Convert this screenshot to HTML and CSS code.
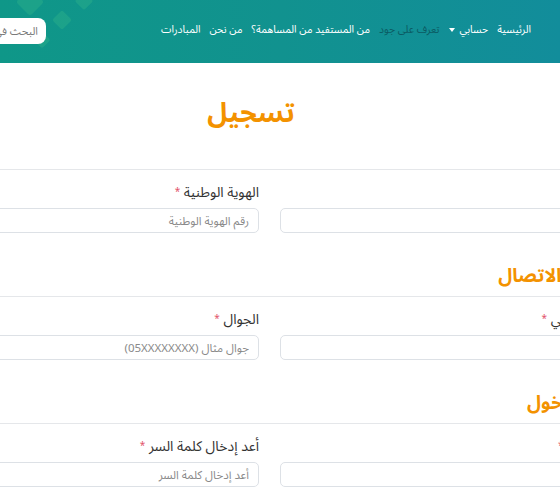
FILE: index.html
```html
<!DOCTYPE html>
<html lang="ar" dir="rtl">
<head>
<meta charset="utf-8">
<title>تسجيل</title>
<link rel="stylesheet" href="styles.css">
</head>
<body>
<header class="topbar">
  <svg class="topbar-shapes" width="110" height="63" viewBox="0 0 110 63" aria-hidden="true">
    <rect x="20" y="-8" width="20" height="20" rx="3" transform="rotate(45 30 2)"/>
    <rect x="55" y="13" width="14" height="14" rx="2" transform="rotate(45 62 20)"/>
    <rect x="77.5" y="-5.5" width="13" height="13" rx="2" transform="rotate(45 84 1)"/>
    <rect x="36" y="34" width="12" height="12" rx="2" transform="rotate(45 42 40)"/>
  </svg>
  <nav class="nav">
    <a class="nav-link" href="#">الرئيسية</a>
    <a class="nav-link has-caret" href="#">حسابي <span class="caret"></span></a>
    <a class="nav-link is-active" href="#">تعرف على جود</a>
    <a class="nav-link" href="#">من المستفيد من المساهمة؟</a>
    <a class="nav-link" href="#">من نحن</a>
    <a class="nav-link" href="#">المبادرات</a>
  </nav>
  <div class="search">
    <input class="search-input" type="text" placeholder="البحث في الموقع">
  </div>
</header>

<main class="register">
  <h1 class="page-title">تسجيل</h1>

  <section class="form-block">
    <div class="field">
      <label class="field-label">الاسم <span class="req">*</span></label>
      <input class="field-input" type="text">
    </div>
    <div class="field">
      <label class="field-label">الهوية الوطنية <span class="req">*</span></label>
      <input class="field-input" type="text" placeholder="رقم الهوية الوطنية">
    </div>
  </section>

  <h2 class="section-title">معلومات الاتصال</h2>
  <section class="form-block">
    <div class="field">
      <label class="field-label">بريد إلكتروني <span class="req">*</span></label>
      <input class="field-input" type="text">
    </div>
    <div class="field">
      <label class="field-label">الجوال <span class="req">*</span></label>
      <input class="field-input" type="text" placeholder="جوال مثال (05XXXXXXXX)">
    </div>
  </section>

  <h2 class="section-title">بيانات الدخول</h2>
  <section class="form-block">
    <div class="field">
      <label class="field-label">كلمة السر <span class="req">*</span></label>
      <input class="field-input" type="password">
    </div>
    <div class="field">
      <label class="field-label">أعد إدخال كلمة السر <span class="req">*</span></label>
      <input class="field-input" type="password" placeholder="أعد إدخال كلمة السر">
    </div>
  </section>
</main>
</body>
</html>
```

FILE: styles.css
```css
html, body {
  margin: 0;
  padding: 0;
  overflow: hidden;
  background: #ffffff;
}

body {
  font-family: "Noto Sans Arabic", "DejaVu Sans", sans-serif;
  color: #333333;
}

/* ---------- top bar ---------- */
.topbar {
  position: relative;
  height: 63px;
  box-sizing: border-box;
  padding: 0 29px 4px 0;
  display: flex;
  align-items: center;
  justify-content: space-between;
  background: linear-gradient(90deg, #0f9788 0%, #11928f 50%, #128d9b 100%);
}

.topbar-shapes {
  position: absolute;
  left: 0;
  top: 0;
  fill: #26aa8a;
  opacity: 0.6;
}

.nav {
  display: flex;
  align-items: center;
  gap: 9px;
  position: relative;
}

.nav-link {
  color: #ffffff;
  font-size: 10.5px;
  text-decoration: none;
  white-space: nowrap;
  display: flex;
  align-items: center;
  gap: 5px;
}

.nav-link.is-active {
  color: #0b5b63;
}

.caret {
  width: 0;
  height: 0;
  border-left: 3.5px solid transparent;
  border-right: 3.5px solid transparent;
  border-top: 4px solid #ffffff;
}

.search {
  position: relative;
  margin-left: -74px;
}

.search-input {
  width: 120px;
  height: 26px;
  box-sizing: border-box;
  border: 0;
  border-radius: 8px;
  padding: 0 8px 0 0;
  background: #ffffff;
  font-family: inherit;
  font-size: 11px;
  color: #555;
  outline: none;
}

.search-input::placeholder {
  color: #7a7a7a;
}

/* ---------- registration form ---------- */
.register {
  margin: 0 -60px 0 -81px;
}

.page-title {
  margin: 31px 0 35px;
  padding-right: 37px;
  text-align: center;
  font-size: 27px;
  line-height: 40px;
  font-weight: 700;
  color: #f39200;
}

.form-block {
  border-top: 1px solid #e5e7ea;
  padding-top: 12px;
  display: grid;
  grid-template-columns: 1fr 1fr;
  column-gap: 21px;
}

.field {
  display: flex;
  flex-direction: column;
  gap: 5px;
}

.field-label {
  font-size: 14px;
  line-height: 20px;
  color: #333333;
  white-space: nowrap;
}

.req {
  color: #e2546b;
  font-size: 10px;
  vertical-align: 2px;
}

.field-input {
  height: 25px;
  box-sizing: border-box;
  border: 1px solid #dde1e6;
  border-radius: 5px;
  padding: 0 9px;
  direction: rtl;
  text-align: right;
  font-family: inherit;
  font-size: 11.5px;
  color: #444;
  background: #fff;
  outline: none;
}

.field-input::placeholder {
  color: #8a8a8a;
}

.section-title {
  margin: 30px -21px 7px 0;
  font-size: 19px;
  line-height: 26px;
  font-weight: 700;
  color: #f39200;
}
```
